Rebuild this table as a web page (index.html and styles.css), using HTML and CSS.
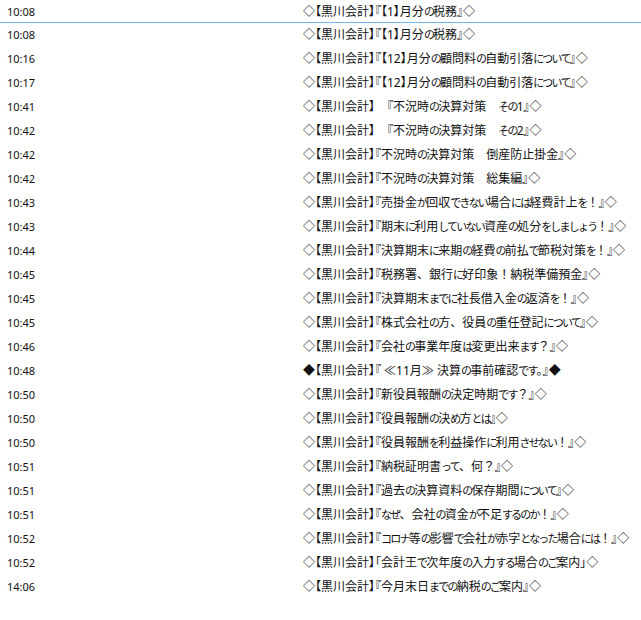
FILE: index.html
```html
<!DOCTYPE html>
<html lang="ja">
<head>
<meta charset="utf-8">
<link rel="stylesheet" href="styles.css">
</head>
<body>
<ul class="list">
  <li class="row first"><span class="time">10:08</span><span class="subj">◇【黒川会計】『【1】月分<span class="k">の</span>税務』◇</span></li>
  <li class="row"><span class="time">10:08</span><span class="subj">◇【黒川会計】『【1】月分<span class="k">の</span>税務』◇</span></li>
  <li class="row"><span class="time">10:16</span><span class="subj">◇【黒川会計】『【12】月分<span class="k">の</span>顧問料<span class="k">の</span>自動引落<span class="k">について</span>』◇</span></li>
  <li class="row"><span class="time">10:17</span><span class="subj">◇【黒川会計】『【12】月分<span class="k">の</span>顧問料<span class="k">の</span>自動引落<span class="k">について</span>』◇</span></li>
  <li class="row"><span class="time">10:41</span><span class="subj">◇【黒川会計】　『不況時<span class="k">の</span>決算対策　<span class="k">その</span>1』◇</span></li>
  <li class="row"><span class="time">10:42</span><span class="subj">◇【黒川会計】　『不況時<span class="k">の</span>決算対策　<span class="k">その</span>2』◇</span></li>
  <li class="row"><span class="time">10:42</span><span class="subj">◇【黒川会計】『不況時<span class="k">の</span>決算対策　倒産防止掛金』◇</span></li>
  <li class="row"><span class="time">10:42</span><span class="subj">◇【黒川会計】『不況時<span class="k">の</span>決算対策　総集編』◇</span></li>
  <li class="row"><span class="time">10:43</span><span class="subj">◇【黒川会計】『売掛金<span class="k">が</span>回収<span class="k">できない</span>場合<span class="k">には</span>経費計上<span class="k">を</span><span class="fw">！</span>』◇</span></li>
  <li class="row"><span class="time">10:43</span><span class="subj">◇【黒川会計】『期末<span class="k">に</span>利用<span class="k">していない</span>資産<span class="k">の</span>処分<span class="k">をしましょう</span><span class="fw">！</span>』◇</span></li>
  <li class="row"><span class="time">10:44</span><span class="subj">◇【黒川会計】『決算期末<span class="k">に</span>来期<span class="k">の</span>経費<span class="k">の</span>前払<span class="k">で</span>節税対策<span class="k">を</span><span class="fw">！</span>』◇</span></li>
  <li class="row"><span class="time">10:45</span><span class="subj">◇【黒川会計】『税務署<span class="fw">、</span>銀行<span class="k">に</span>好印象<span class="fw">！</span>納税準備預金』◇</span></li>
  <li class="row"><span class="time">10:45</span><span class="subj">◇【黒川会計】『決算期末<span class="k">までに</span>社長借入金<span class="k">の</span>返済<span class="k">を</span><span class="fw">！</span>』◇</span></li>
  <li class="row"><span class="time">10:45</span><span class="subj">◇【黒川会計】『株式会社<span class="k">の</span>方<span class="fw">、</span>役員<span class="k">の</span>重任登記<span class="k">について</span>』◇</span></li>
  <li class="row"><span class="time">10:46</span><span class="subj">◇【黒川会計】『会社<span class="k">の</span>事業年度<span class="k">は</span>変更出来<span class="k">ます</span><span class="fw">？</span>』◇</span></li>
  <li class="row"><span class="time">10:48</span><span class="subj">◆【黒川会計】『 ≪11月≫ 決算<span class="k">の</span>事前確認<span class="k">です</span><span class="fw">。</span>』◆</span></li>
  <li class="row"><span class="time">10:50</span><span class="subj">◇【黒川会計】『新役員報酬<span class="k">の</span>決定時期<span class="k">です</span><span class="fw">？</span>』◇</span></li>
  <li class="row"><span class="time">10:50</span><span class="subj">◇【黒川会計】『役員報酬<span class="k">の</span>決<span class="k">め</span>方<span class="k">とは</span>』◇</span></li>
  <li class="row"><span class="time">10:50</span><span class="subj">◇【黒川会計】『役員報酬<span class="k">を</span>利益操作<span class="k">に</span>利用<span class="k">させない</span><span class="fw">！</span>』◇</span></li>
  <li class="row"><span class="time">10:51</span><span class="subj">◇【黒川会計】『納税証明書<span class="k">って</span><span class="fw">、</span>何<span class="fw">？</span>』◇</span></li>
  <li class="row"><span class="time">10:51</span><span class="subj">◇【黒川会計】『過去<span class="k">の</span>決算資料<span class="k">の</span>保存期間<span class="k">について</span>』◇</span></li>
  <li class="row"><span class="time">10:51</span><span class="subj">◇【黒川会計】『<span class="k">なぜ</span><span class="fw">、</span>会社<span class="k">の</span>資金<span class="k">が</span>不足<span class="k">するのか</span><span class="fw">！</span>』◇</span></li>
  <li class="row"><span class="time">10:52</span><span class="subj">◇【黒川会計】『<span class="k">コロナ</span>等<span class="k">の</span>影響<span class="k">で</span>会社<span class="k">が</span>赤字<span class="k">となった</span>場合<span class="k">には</span><span class="fw">！</span>』◇</span></li>
  <li class="row"><span class="time">10:52</span><span class="subj">◇【黒川会計】「会計王<span class="k">で</span>次年度<span class="k">の</span>入力<span class="k">する</span>場合<span class="k">のご</span>案内」◇</span></li>
  <li class="row"><span class="time">14:06</span><span class="subj">◇【黒川会計】『今月末日<span class="k">までの</span>納税<span class="k">のご</span>案内』◇</span></li>
</ul>
</body>
</html>
```

FILE: styles.css
```css
html, body {
  margin: 0;
  padding: 0;
  background: #ffffff;
}
.list {
  list-style: none;
  margin: 0;
  padding: 0;
  width: 641px;
}
.row {
  display: grid;
  grid-template-columns: 303px 1fr;
  height: 24px;
  line-height: 24px;
  color: #111111;
  white-space: nowrap;
  overflow: hidden;
}
.row.first {
  height: 22px;
  border-bottom: 1px solid #6cb6f2;
  overflow: visible;
}
.time {
  padding-left: 7px;
  font-family: "Noto Sans", "Open Sans", sans-serif;
  font-size: 11px;
}
.subj {
  font-family: "Noto Sans", "Noto Sans CJK JP", sans-serif;
  font-size: 12px;
  font-feature-settings: "palt";
}
.k {
  font-size: 11px;
  letter-spacing: -1.8px;
  font-feature-settings: normal;
}
.fw {
  font-feature-settings: normal;
}
```
